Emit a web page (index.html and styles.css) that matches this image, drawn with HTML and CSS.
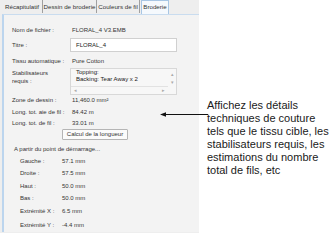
FILE: index.html
```html
<!DOCTYPE html>
<html lang="fr">
<head>
<meta charset="utf-8">
<link rel="stylesheet" href="styles.css">
</head>
<body>
<div class="page">
  <div class="dialog">
    <div class="tabs">
      <div class="tab t1">Récapitulatif</div>
      <div class="tab t2">Dessin de broderie</div>
      <div class="tab t3">Couleurs de fil</div>
      <div class="tab tab-active">Broderie</div>
    </div>
    <div class="panel">
      <div class="row r1"><span class="lbl">Nom de fichier :</span><span class="val">FLORAL_4 V3.EMB</span></div>
      <div class="row r2"><span class="lbl">Titre :</span><span class="input">FLORAL_4</span></div>
      <div class="row r3"><span class="lbl">Tissu automatique :</span><span class="val">Pure Cotton</span></div>
      <div class="row r4"><span class="lbl lbl-multi">Stabilisateurs<br>requis :</span>
        <div class="box">
          <div class="box-text">Topping:<br>Backing: Tear Away x 2</div>
          <div class="vscroll"><span>▴</span><span>▾</span></div>
          <div class="hscroll"><span>◂</span><span>▸</span></div>
        </div>
      </div>
      <div class="row r5"><span class="lbl">Zone de dessin :</span><span class="val">11,460.0 mm²</span></div>
      <div class="row r6"><span class="lbl">Long. tot. aie de fil :</span><span class="val">84.42 m</span></div>
      <div class="row r7"><span class="lbl">Long. tot. de fil :</span><span class="val">33.01 m</span></div>
      <div class="btn-row"><span class="btn">Calcul de la longueur</span></div>
      <div class="section">A partir du point de démarrage...</div>
      <div class="sub s1"><span class="slbl">Gauche :</span><span>57.1 mm</span></div>
      <div class="sub s2"><span class="slbl">Droite :</span><span>57.5 mm</span></div>
      <div class="sub s3"><span class="slbl">Haut :</span><span>50.0 mm</span></div>
      <div class="sub s4"><span class="slbl">Bas :</span><span>50.0 mm</span></div>
      <div class="sub s5"><span class="slbl">Extrémité X :</span><span>6.5 mm</span></div>
      <div class="sub s6"><span class="slbl">Extrémité Y :</span><span>-4.4 mm</span></div>
    </div>
  </div>
  <div class="note">Affichez les détails<br>techniques de couture<br>tels que le tissu cible, les<br>stabilisateurs requis, les<br>estimations du nombre<br>total de fils, etc</div>
  <svg class="arrow" width="48" height="7" viewBox="0 0 48 7">
    <line x1="3" y1="3.5" x2="48" y2="3.5" stroke="#111" stroke-width="1"/>
    <path d="M0 3.5 L6 1.2 L6 5.8 Z" fill="#111"/>
  </svg>
</div>
</body>
</html>
```
FILE: styles.css
```css
* { box-sizing: border-box; }
html, body { margin: 0; padding: 0; background: #ffffff; }
.page {
  position: relative;
  width: 332px;
  height: 246px;
  display: flex;
  font-family: "Liberation Sans", Arial, sans-serif;
  color: #222;
}
.dialog {
  width: 199px;
  height: 233px;
  background: #eeeeee;
  display: flex;
  flex-direction: column;
}
.tabs {
  display: flex;
  height: 14px;
  padding-left: 2px;
  font-size: 6.2px;
  color: #333;
}
.tab {
  padding: 3px 0 0 0;
  border-right: 1px solid #a0a0a0;
  height: 13px;
  line-height: 7px;
  background: #eeeeee;
  text-align: center;
}
.t1 { width: 41px; }
.t2 { width: 54px; }
.t3 { width: 43px; }
.tab-active {
  width: 28px;
  background: #f5f9fd;
  border: 1px solid #a8c6e4;
  border-bottom: none;
  padding-top: 2px;
  height: 14px;
  margin-left: 1px;
  color: #333;
}
.panel {
  flex: 1;
  margin-left: 2px;
  border-left: 2px solid #bcd5ee;
  border-top: 1px solid #c9dcef;
  background: #f3f3f3;
  padding: 10px 0 0 8px;
  font-size: 6px;
  display: flex;
  flex-direction: column;
  margin-bottom: 1px;
}
.row {
  display: flex;
  align-items: center;
  height: 10px;
  line-height: 10px;
}
.lbl { width: 58px; flex: none; color: #333; }
.val { padding-left: 2px; color: #333; }
.r2 { margin-top: 3px; height: 14px; }
.input {
  width: 107px;
  height: 14px;
  background: #ffffff;
  border: 1px solid #d0d0d0;
  padding-left: 5px;
  line-height: 12px;
}
.r3 { margin-top: 4px; }
.r4 { margin-top: 2px; height: 27px; align-items: flex-start; }
.lbl-multi { line-height: 8px; padding-top: 1px; }
.box {
  position: relative;
  width: 107px;
  height: 27px;
  border: 1px solid #d8d8d8;
  background: #f7f7f7;
}
.box-text { padding: 0 0 0 5px; line-height: 7px; }
.vscroll {
  position: absolute;
  right: 0;
  top: 0;
  width: 8px;
  height: 18px;
  display: flex;
  flex-direction: column;
  align-items: center;
  font-size: 5px;
  line-height: 8px;
  color: #aaa;
  padding-top: 1px;
}
.hscroll {
  position: absolute;
  left: 0;
  right: 8px;
  bottom: 0;
  height: 8px;
  border-top: 1px solid #e2e2e2;
  display: flex;
  justify-content: space-between;
  padding: 0 3px;
  font-size: 5px;
  line-height: 7px;
  color: #aaa;
}
.r6 { margin-top: 2px; }
.r7 { margin-top: 1px; }
.btn-row {
  margin-top: 1px;
  padding-left: 50px;
  height: 11px;
}
.btn {
  display: inline-block;
  width: 66px;
  height: 11px;
  border: 1px solid #b5b5b5;
  border-radius: 1px;
  background: #fbfbfb;
  text-align: center;
  line-height: 9px;
  color: #333;
}
.section {
  margin-top: 4px;
  height: 10px;
  line-height: 10px;
  padding-left: 2px;
  color: #333;
}
.sub {
  display: flex;
  height: 10px;
  line-height: 10px;
  padding-left: 8px;
  color: #333;
}
.slbl { width: 42px; flex: none; }
.s1 { margin-top: 2px; }
.s2 { margin-top: 2px; }
.s3 { margin-top: 3px; }
.s4 { margin-top: 2px; }
.s5 { margin-top: 3px; }
.s6 { margin-top: 4px; }
.note {
  margin-left: 8px;
  padding-top: 99px;
  font-size: 11px;
  line-height: 13px;
  white-space: nowrap;
  color: #1a1a1a;
}
.arrow {
  position: absolute;
  left: 160px;
  top: 111px;
}
```
